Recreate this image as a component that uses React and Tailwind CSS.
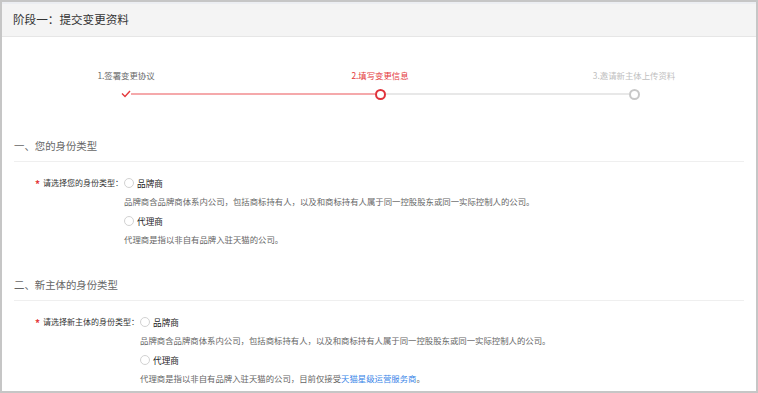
import React from 'react'

const font = { fontFamily: '"Microsoft YaHei", "Noto Sans CJK SC", "Noto Sans", sans-serif' }

const Step = ({ label, color, left, right, mark }) => (
    <div className="w-[254px] shrink-0 flex flex-col items-center">
        <div className={`text-[8.4px] leading-[12px] mb-[7px] ${color}`}>{label}</div>
        <div className="flex items-center w-full h-[12px]">
            <div className={`flex-1 h-[2px] ${left}`} />
            {mark}
            <div className={`flex-1 h-[2px] ${right}`} />
        </div>
    </div>
)

const Check = () => (
    <svg width="10" height="8" viewBox="0 0 10 8" className="shrink-0">
        <path d="M1 3.5 L4 6.5 L9 1" fill="none" stroke="#e4393c" strokeWidth="1.4" />
    </svg>
)

const Radio = ({ children }) => (
    <div className="flex items-center h-[14px]">
        <span className="w-[10px] h-[10px] rounded-full border border-[#d2d2d2] bg-white mr-[3px] shrink-0" />
        <span className="text-[8.6px] text-[#222]">{children}</span>
    </div>
)

const Desc = ({ children }) => (
    <div className="text-[8.4px] leading-[12px] text-[#666] mt-[5px]">{children}</div>
)

const Section = ({ title, label, second }) => (
    <div>
        <div className="mx-[12px] border-b border-[#efefef] pb-[8px] text-[10.4px] leading-[14px] text-[#666]">
            {title}
        </div>
        <div className="flex pl-[33px] pt-[14px]">
            <div className="flex items-center h-[14px] text-[8px] text-[#333] mr-[1px]">
                <span className="text-[#e4393c] mr-[3px] text-[10px] font-bold">*</span>
                <span>{label}</span>
            </div>
            <div className="flex flex-col">
                <Radio>品牌商</Radio>
                <Desc>品牌商含品牌商体系内公司，包括商标持有人，以及和商标持有人属于同一控股股东或同一实际控制人的公司。</Desc>
                <div className="mt-[7px]">
                    <Radio>代理商</Radio>
                </div>
                {second ? (
                    <Desc>
                        代理商是指以非自有品牌入驻天猫的公司，目前仅接受<span className="text-[#3a86e8]">天猫星级运营服务商</span>。
                    </Desc>
                ) : (
                    <Desc>代理商是指以非自有品牌入驻天猫的公司。</Desc>
                )}
            </div>
        </div>
    </div>
)

export default function App() {
    return (
        <div style={font} className="w-[758px] h-[393px] overflow-hidden bg-white border-2 border-[#c6c6c6] box-border">
            <div className="h-[35px] bg-[#f4f4f4] border-t-[2px] border-t-[#eceef2] border-b border-[#e6e6e6] flex items-center pl-[11px]">
                <span className="text-[11.6px] text-[#333]">阶段一：提交变更资料</span>
            </div>

            <div className="flex pt-[32px] ml-[-3px]">
                <Step label="1.签署变更协议" color="text-[#666]" left="" right="bg-[#f5a9ab]" mark={<Check />} />
                <Step
                    label="2.填写变更信息"
                    color="text-[#e4393c]"
                    left="bg-[#f5a9ab]"
                    right="bg-[#e8e8e8]"
                    mark={<span className="w-[11px] h-[11px] rounded-full border-2 border-[#e0323a] bg-white shrink-0" />}
                />
                <Step
                    label="3.邀请新主体上传资料"
                    color="text-[#c0c0c0]"
                    left="bg-[#e8e8e8]"
                    right=""
                    mark={<span className="w-[11px] h-[11px] rounded-full border-2 border-[#c8c8c8] bg-white shrink-0" />}
                />
            </div>

            <div className="pt-[39px]">
                <Section title="一、您的身份类型" label="请选择您的身份类型：" />
            </div>
            <div className="pt-[33px]">
                <Section title="二、新主体的身份类型" label="请选择新主体的身份类型：" second />
            </div>
        </div>
    )
}
